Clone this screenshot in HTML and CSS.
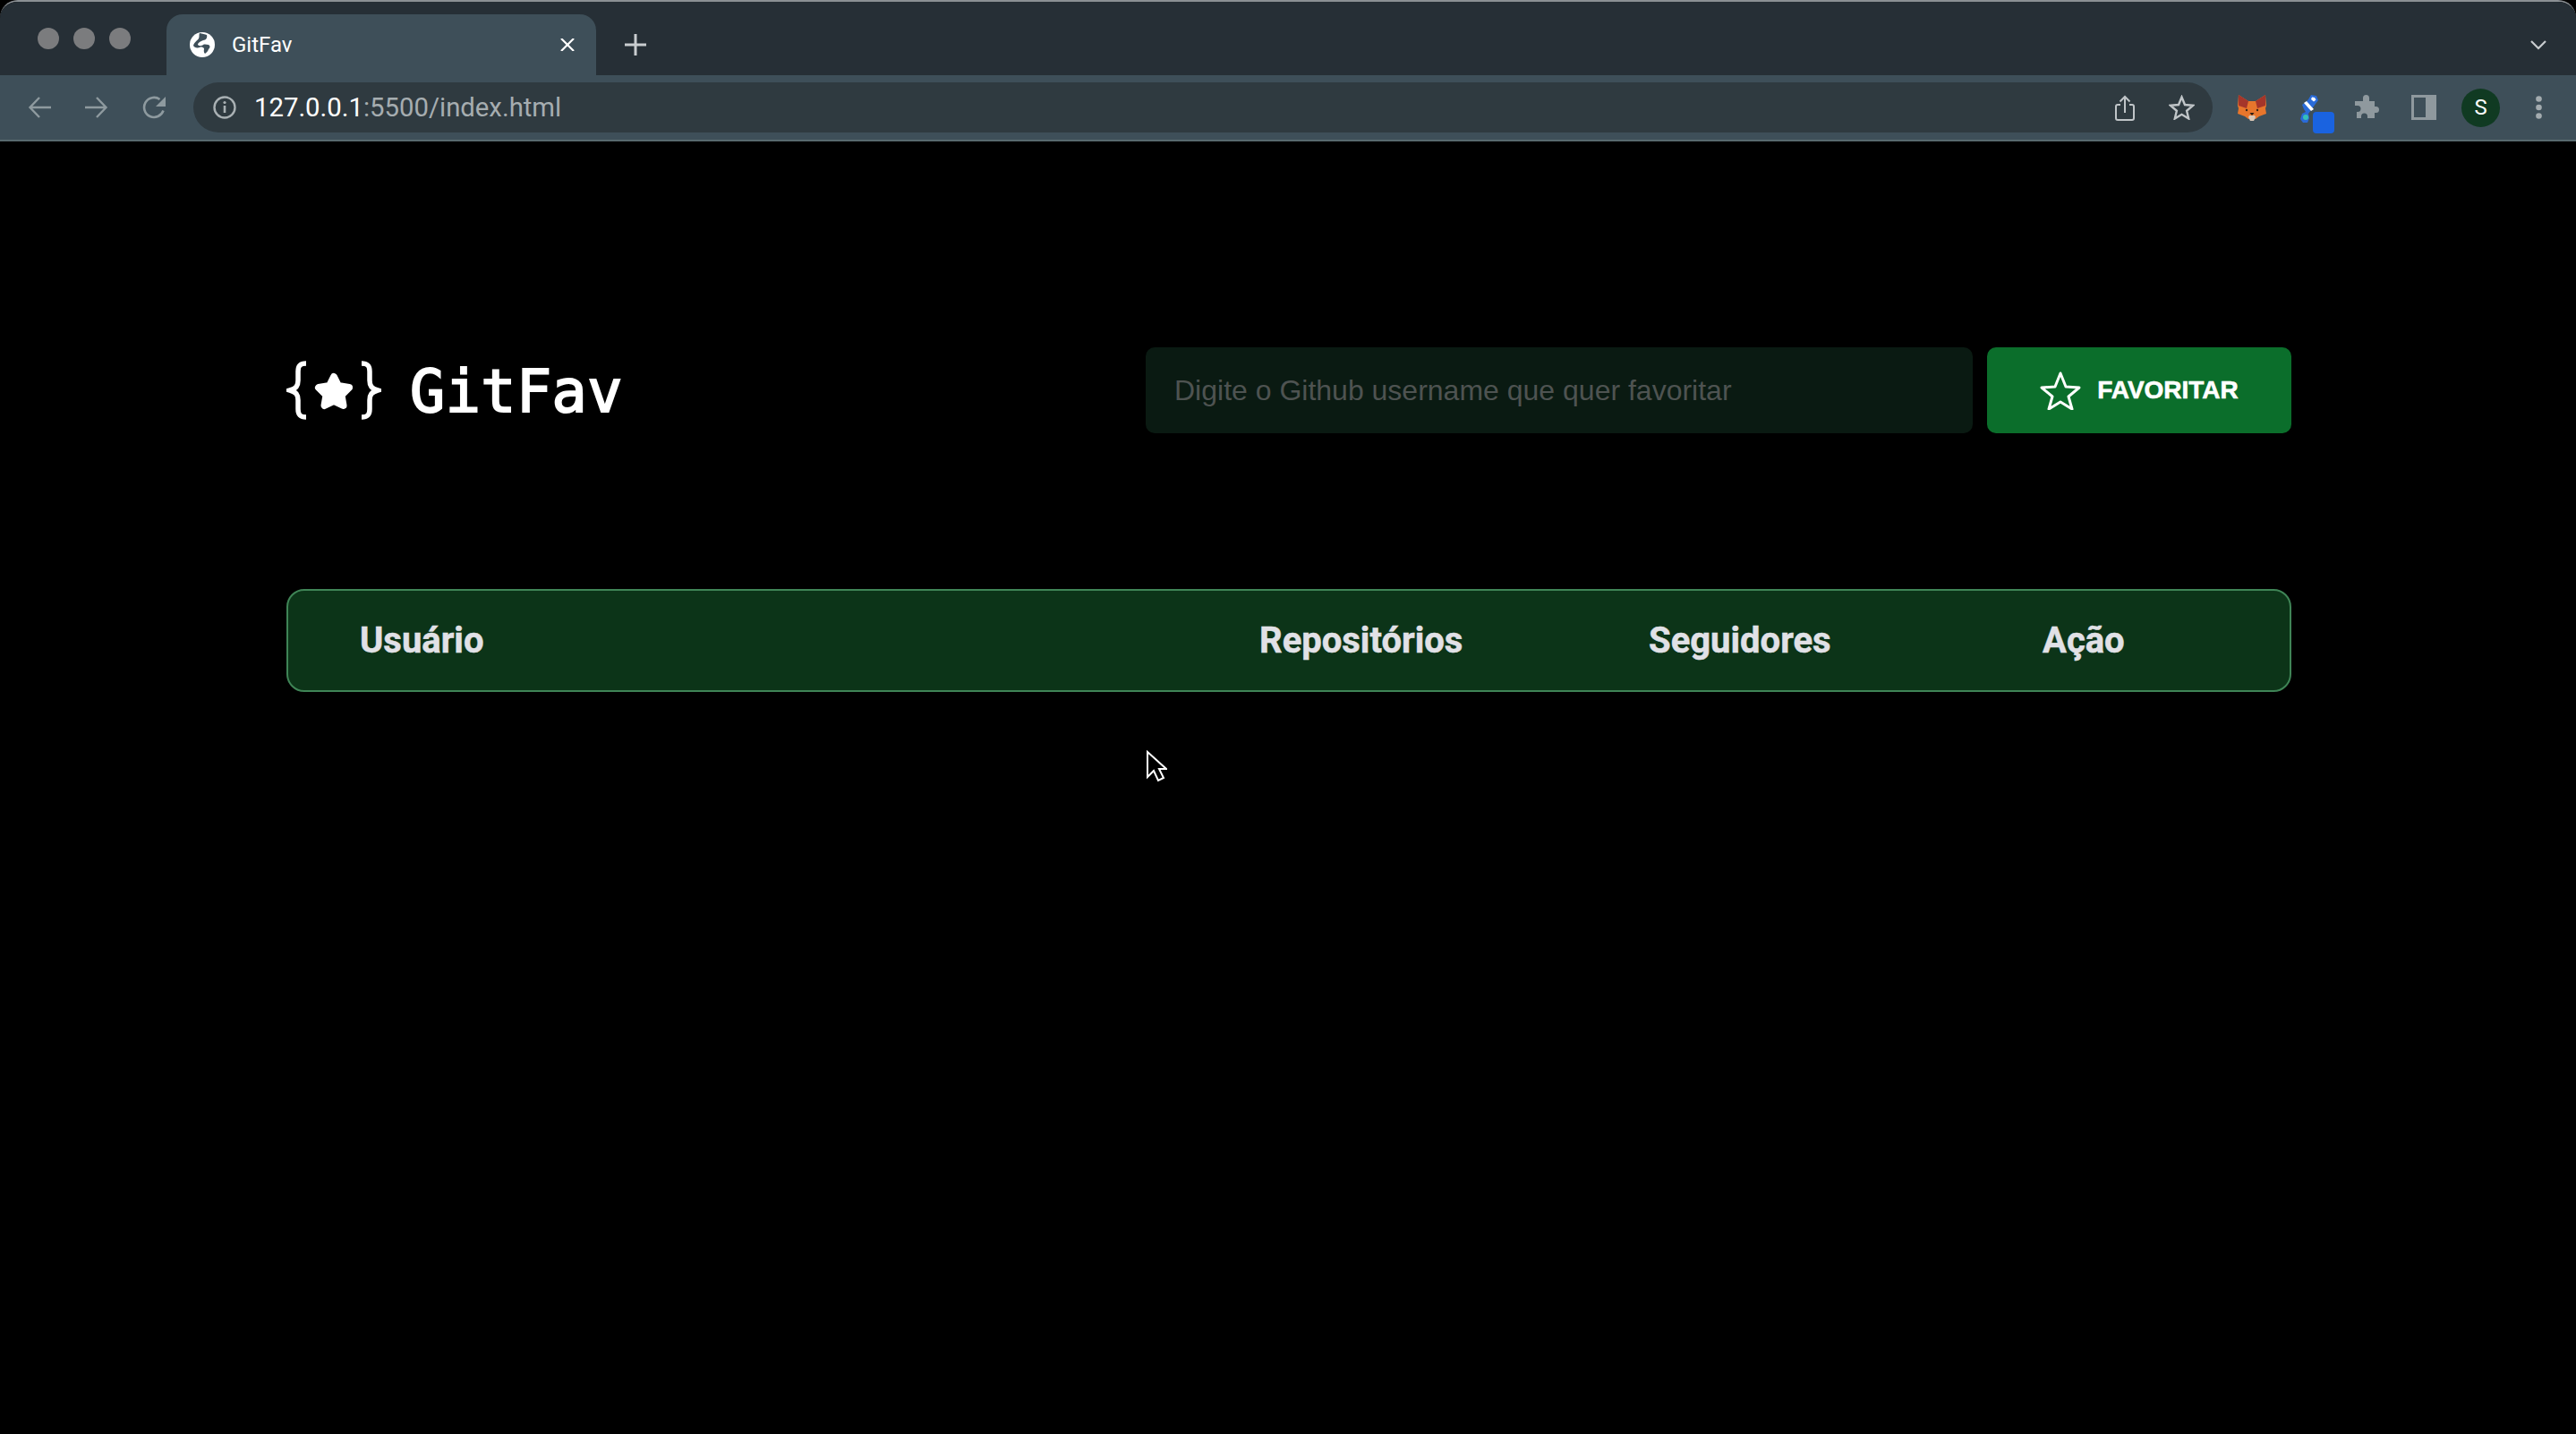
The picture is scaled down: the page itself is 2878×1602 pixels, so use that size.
FILE: index.html
```html
<!DOCTYPE html>
<html lang="pt-BR">
<head>
  <meta charset="UTF-8" />
  <title>GitFav</title>
  <link rel="stylesheet" href="styles.css">
</head>
<body>

<div class="browser">
  <div class="tab-strip">
    <div class="lights"><span></span><span></span><span></span></div>
    <div class="tab">
      <svg class="favicon" viewBox="0 0 28 28">
        <circle cx="14" cy="14" r="14" fill="#fff"/>
        <path d="M11 1c3 1 6 1 8 2 1 3-1 6-4 6-3 1-6 3-6 5 2 2 5 1 6 0 2-1 4 0 6 0 2 1 2 3 0 5-1 3-3 4-4 5-2-2-1-4-1-6-1-1-3-2-5-1-3 1-6 0-7-2 1-4 5-6 6-8 1-2 0-4 1-6z" fill="#3e4f59"/>
      </svg>
      <span class="tab-title">GitFav</span>
      <svg class="tab-close" viewBox="0 0 16 14"><path d="M1 0l14 14M15 0L1 14" stroke="#fff" stroke-width="2.200" fill="none"/></svg>
    </div>
    <svg class="new-tab" viewBox="0 0 24 24"><path d="M12 0v24M0 12h24" stroke="#c9cdd0" stroke-width="3" fill="none"/></svg>
    <svg class="tab-menu" viewBox="0 0 18 11"><path d="M1 1l8 8 8-8" stroke="#c9cdd0" stroke-width="2.200" fill="none"/></svg>
  </div>

  <div class="toolbar">
    <div class="nav">
      <svg class="nav-icon" viewBox="0 0 26 26"><path d="M26 13H3M13 2L2.500 13 13 24" stroke="#8e9a9f" stroke-width="2.400" fill="none"/></svg>
      <svg class="nav-icon" viewBox="0 0 26 26"><path d="M0 13h23M13 2l10.500 11L13 24" stroke="#8e9a9f" stroke-width="2.400" fill="none"/></svg>
      <svg class="nav-icon" viewBox="0 0 26 26"><path d="M23.500 16.500A11 11 0 1 1 19.500 4" stroke="#8e9a9f" stroke-width="2.600" fill="none"/><path d="M26 1v11H15z" fill="#8e9a9f"/></svg>
    </div>

    <div class="omnibox">
      <svg class="info-icon" viewBox="0 0 26 26">
        <circle cx="13" cy="13" r="11.500" stroke="#a9b0b3" stroke-width="2.400" fill="none"/>
        <path d="M13 11v8" stroke="#a9b0b3" stroke-width="2.600"/>
        <circle cx="13" cy="7.500" r="1.600" fill="#a9b0b3"/>
      </svg>
      <span class="url"><span class="url-host">127.0.0.1</span>:5500/index.html</span>
      <svg class="omni-share" viewBox="0 0 22 29">
        <path d="M6 11H3a2 2 0 0 0-2 2v13a2 2 0 0 0 2 2h16a2 2 0 0 0 2-2V13a2 2 0 0 0-2-2h-3" stroke="#c0c5c8" stroke-width="2" fill="none"/>
        <path d="M11 20V2M5.500 7.500L11 2l5.500 5.500" stroke="#c0c5c8" stroke-width="2" fill="none"/>
      </svg>
      <svg class="omni-star" viewBox="0 0 29 28">
        <path d="M14.500 2.500l3.500 8.500 9 .8-6.900 6 2.100 8.700-7.700-4.700-7.700 4.700 2.100-8.700-6.900-6 9-.8z" stroke="#c0c5c8" stroke-width="2.400" fill="none" stroke-linejoin="miter"/>
      </svg>
    </div>

    <div class="extensions">
      <svg class="ext-fox" viewBox="0 0 32 29">
        <path d="M1 0l11 7h8l11-7 1 12-1 3 1 6-8 3-4 3h-8l-4-3-8-3 1-6-1-3z" fill="#e8762c"/>
        <path d="M1 0l11 7-2 8-9-3zM31 0L20 7l2 8 9-3z" fill="#a5352a"/>
        <path d="M12 25l1-2h6l1 2-2 4h-4z" fill="#d9c6b5"/>
        <path d="M13.500 20h5L16 23z" fill="#2a1c14"/>
        <circle cx="10" cy="17" r="1.200" fill="#3a2416"/><circle cx="22" cy="17" r="1.200" fill="#3a2416"/>
      </svg>
      <div class="ext-wallet">
        <svg class="ext-wallet-icon" viewBox="0 0 20 31">
          <path d="M12 0l6 1 2 5-3 4-8 11 1 5-2 5H3l-3-4 2-6 4-2-2-3-2-5 4-3 3-3z" fill="#2a6bd8"/>
          <path d="M3 10l3-2 8 9-3 2z" fill="#fff" transform="translate(1 -1)"/>
          <path d="M13 2.500l3 .5 1.500 2.500-2.500 2-3-2.500z" fill="#fff"/>
          <circle cx="6" cy="25" r="3" fill="#35c0b8"/>
        </svg>
        <span class="ext-badge"></span>
      </div>
      <svg class="ext-puzzle" viewBox="0 0 28 28"><path d="M10 3.500a3.500 3.500 0 0 1 7 0V7h6v6h1.500a3.500 3.500 0 0 1 0 7H23v6H15v-2a3.500 3.500 0 0 0-7 0v2H3v-7h1a3.500 3.500 0 0 0 0-7H1V7h9z" fill="#8f999e"/></svg>
      <div class="ext-panel"></div>
      <div class="avatar">S</div>
      <svg class="kebab" viewBox="0 0 7 26"><circle cx="3.500" cy="3.500" r="3.300" fill="#a3abaf"/><circle cx="3.500" cy="13" r="3.300" fill="#a3abaf"/><circle cx="3.500" cy="22.500" r="3.300" fill="#a3abaf"/></svg>
    </div>
  </div>
</div>

<div class="page">
  <header class="top">
    <div class="logo">
      <svg class="logo-mark" viewBox="0 0 106 66">
        <path d="M22 3c-7 0-9 3-9 9v10c0 6-2 9-9 11 7 2 9 5 9 11v10c0 6 2 9 9 9" stroke="#fff" stroke-width="5.500" fill="none"/>
        <path d="M84 3c7 0 9 3 9 9v10c0 6 2 9 9 11-7 2-9 5-9 11v10c0 6-2 9-9 9" stroke="#fff" stroke-width="5.500" fill="none"/>
        <path d="M53 18l5 10 12 2-8.500 8.500 2 11.500L53 45l-10.500 5 2-11.500L36 30l12-2z" fill="#fff" stroke="#fff" stroke-width="8" stroke-linejoin="round"/>
      </svg>
      <span class="logo-text">GitFav</span>
    </div>
    <form class="search">
      <input type="text" class="search-input" placeholder="Digite o Github username que quer favoritar">
      <button type="button" class="search-btn">
        <svg class="btn-star" viewBox="0 0 46 44"><path d="M23 3l6 15 15 1-12 10 4 14-13-8-13 8 4-14L2 19l15-1z" stroke="#fff" stroke-width="3" fill="none" stroke-linejoin="round"/></svg>
        FAVORITAR
      </button>
    </form>
  </header>

  <div class="table-head">
    <span>Usuário</span>
    <span>Repositórios</span>
    <span>Seguidores</span>
    <span>Ação</span>
  </div>
</div>

<svg class="cursor" viewBox="0 0 24 38"><path d="M2 2v28l7-7 5 11 6-3-5-10h8z" fill="#000" stroke="#fff" stroke-width="2"/></svg>

</body>
</html>
```

FILE: styles.css
```css
html, body {
  margin: 0;
  height: 100%;
  background-color: #000;
}
body {
  position: relative;
  overflow: hidden;
}
svg {
  flex: none;
}

/* browser chrome */
.browser {
  height: 158px;
  border-radius: 20px 20px 0 0;
  border-top: 2px solid #8b9094;
  box-sizing: border-box;
  overflow: hidden;
  font-family: Roboto, "Liberation Sans", sans-serif;
}
.tab-strip {
  height: 82px;
  background-color: #262f36;
  display: flex;
  align-items: flex-end;
}
.lights {
  display: flex;
  gap: 16px;
  padding: 0 0 29px 42px;
  width: 186px;
  box-sizing: border-box;
  flex: none;
}
.lights span {
  flex: none;
  width: 24px;
  height: 24px;
  border-radius: 50%;
  background-color: #7b7c7e;
}
.tab {
  width: 480px;
  height: 68px;
  flex: none;
  background-color: #3e4f59;
  border-radius: 18px 18px 0 0;
  display: flex;
  align-items: center;
  padding: 0 24px 0 26px;
  box-sizing: border-box;
  color: #fff;
}
.favicon {
  width: 28px;
  height: 28px;
}
.tab-title {
  margin-left: 19px;
  font-size: 24px;
  flex: 1;
}
.tab-close {
  width: 16px;
  height: 14px;
}
.new-tab {
  width: 24px;
  height: 24px;
  margin: 0 0 22px 32px;
}
.tab-menu {
  width: 18px;
  height: 11px;
  margin: 0 33px 28px auto;
}
.toolbar {
  height: 74px;
  background-color: #3e4f59;
  border-bottom: 2px solid #58696e;
  box-sizing: border-box;
  display: flex;
  align-items: center;
  padding-left: 31px;
}
.nav {
  display: flex;
  gap: 38px;
}
.nav-icon {
  width: 26px;
  height: 26px;
}
.omnibox {
  width: 2256px;
  height: 56px;
  margin-left: 31px;
  background-color: #2f3a40;
  border-radius: 28px;
  display: flex;
  align-items: center;
  padding: 0 20px 0 22px;
  box-sizing: border-box;
  flex: none;
}
.info-icon {
  width: 26px;
  height: 26px;
}
.url {
  margin-left: 20px;
  font-size: 29.300px;
  color: #a6adb0;
  flex: 1;
}
.url-host {
  color: #fff;
}
.omni-share {
  width: 22px;
  height: 29px;
  margin-right: 38px;
}
.omni-star {
  width: 29px;
  height: 28px;
}
.extensions {
  display: flex;
  align-items: center;
  margin-left: 28px;
}
.ext-fox {
  width: 32px;
  height: 29px;
}
.ext-wallet {
  position: relative;
  width: 38px;
  height: 43px;
  margin: 7px 0 -7px 38px;
}
.ext-wallet-icon {
  width: 20px;
  height: 31px;
  display: block;
}
.ext-badge {
  position: absolute;
  right: 0;
  bottom: 0;
  width: 24px;
  height: 24px;
  background-color: #1a63e0;
  border-radius: 4px;
}
.ext-puzzle {
  width: 28px;
  height: 28px;
  margin-left: 22px;
}
.ext-panel {
  width: 28px;
  height: 28px;
  margin-left: 36px;
  box-sizing: border-box;
  border: 3px solid #8f999e;
  border-right-width: 12px;
}
.avatar {
  width: 43px;
  height: 43px;
  margin-left: 28px;
  border-radius: 50%;
  background-color: #103a22;
  color: #fff;
  font-size: 24px;
  display: flex;
  align-items: center;
  justify-content: center;
}
.kebab {
  width: 7px;
  height: 26px;
  margin-left: 40px;
}

/* pagina */
.page {
  padding: 230px 318px 0 320px;
}
.top {
  display: flex;
  justify-content: space-between;
  align-items: center;
}
.logo {
  display: flex;
  align-items: center;
  gap: 32px;
}
.logo-mark {
  width: 106px;
  height: 66px;
}
.logo-text {
  font-family: "DejaVu Sans Mono", "Liberation Mono", monospace;
  font-size: 65px;
  letter-spacing: 0.500px;
  position: relative;
  top: 1px;
  color: #fff;
  -webkit-text-stroke: 2px #fff;
}
.search {
  display: flex;
  gap: 16px;
}
.search-input {
  width: 924px;
  height: 96px;
  box-sizing: border-box;
  border: none;
  border-radius: 10px;
  padding: 0 32px;
  background-color: #0a1a12;
  font-family: "Liberation Sans", Arial, sans-serif;
  font-size: 32px;
  color: #fff;
}
.search-input::placeholder {
  color: #4e5351;
  opacity: 1;
}
.search-btn {
  width: 340px;
  height: 96px;
  border: none;
  border-radius: 10px;
  background-color: #0b6e2b;
  color: #fff;
  font-family: "Liberation Sans", Arial, sans-serif;
  font-weight: bold;
  font-size: 28px;
  -webkit-text-stroke: 0.600px #fff;
  display: flex;
  align-items: center;
  justify-content: center;
  gap: 18px;
  padding: 0;
}
.btn-star {
  width: 46px;
  height: 44px;
}
.table-head {
  margin-top: 174px;
  height: 115px;
  box-sizing: border-box;
  border: 2px solid #3f8456;
  border-radius: 20px;
  background-color: #0c3418;
  display: grid;
  grid-template-columns: 1005px 435px 440px 1fr;
  align-items: center;
  padding-left: 80px;
  font-family: Roboto, "Liberation Sans", sans-serif;
  font-weight: bold;
  font-size: 40px;
  -webkit-text-stroke: 0.500px #e1e1e6;
  color: #e1e1e6;
}

.cursor {
  position: absolute;
  left: 1280px;
  top: 838px;
  width: 24px;
  height: 38px;
}
```
